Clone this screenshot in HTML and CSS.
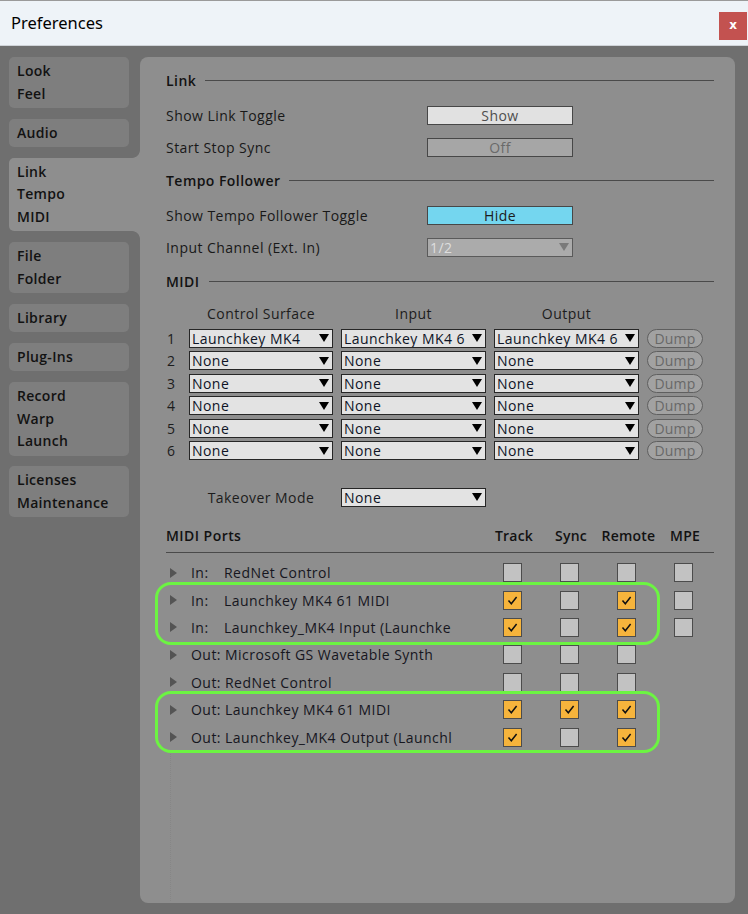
FILE: index.html
```html
<!DOCTYPE html>
<html>
<head>
<meta charset="utf-8">
<title>Preferences</title>
<link rel="stylesheet" href="styles.css">
</head>
<body>
<div class="window">
  <header class="titlebar">
    <span class="title">Preferences</span>
    <span class="close">x</span>
  </header>
  <div class="main">
    <nav class="tabs">
      <div class="tab"><span>Look</span><span>Feel</span></div>
      <div class="tab"><span>Audio</span></div>
      <div class="tab active"><span>Link</span><span>Tempo</span><span>MIDI</span></div>
      <div class="tab"><span>File</span><span>Folder</span></div>
      <div class="tab"><span>Library</span></div>
      <div class="tab"><span>Plug-Ins</span></div>
      <div class="tab"><span>Record</span><span>Warp</span><span>Launch</span></div>
      <div class="tab"><span>Licenses</span><span>Maintenance</span></div>
    </nav>
    <section class="panel">
      <div class="sec-head first">Link</div>
      <div class="row"><span class="label">Show Link Toggle</span><span class="btn btn-light">Show</span></div>
      <div class="row"><span class="label">Start Stop Sync</span><span class="btn btn-off">Off</span></div>

      <div class="sec-head">Tempo Follower</div>
      <div class="row"><span class="label">Show Tempo Follower Toggle</span><span class="btn btn-on">Hide</span></div>
      <div class="row"><span class="label">Input Channel (Ext. In)</span><span class="select select-disabled"><span class="sel-text">1/2</span><span class="arrow"></span></span></div>

      <div class="sec-head midi">MIDI</div>
      <div class="midi-grid">
        <span></span>
        <span class="colhead">Control Surface</span>
        <span class="colhead">Input</span>
        <span class="colhead">Output</span>
        <span></span>

        <span class="num">1</span>
        <span class="select"><span class="sel-text">Launchkey MK4</span><span class="arrow"></span></span>
        <span class="select"><span class="sel-text">Launchkey MK4 6</span><span class="arrow"></span></span>
        <span class="select"><span class="sel-text">Launchkey MK4 6</span><span class="arrow"></span></span>
        <span class="dump">Dump</span>

        <span class="num">2</span>
        <span class="select"><span class="sel-text">None</span><span class="arrow"></span></span>
        <span class="select"><span class="sel-text">None</span><span class="arrow"></span></span>
        <span class="select"><span class="sel-text">None</span><span class="arrow"></span></span>
        <span class="dump">Dump</span>

        <span class="num">3</span>
        <span class="select"><span class="sel-text">None</span><span class="arrow"></span></span>
        <span class="select"><span class="sel-text">None</span><span class="arrow"></span></span>
        <span class="select"><span class="sel-text">None</span><span class="arrow"></span></span>
        <span class="dump">Dump</span>

        <span class="num">4</span>
        <span class="select"><span class="sel-text">None</span><span class="arrow"></span></span>
        <span class="select"><span class="sel-text">None</span><span class="arrow"></span></span>
        <span class="select"><span class="sel-text">None</span><span class="arrow"></span></span>
        <span class="dump">Dump</span>

        <span class="num">5</span>
        <span class="select"><span class="sel-text">None</span><span class="arrow"></span></span>
        <span class="select"><span class="sel-text">None</span><span class="arrow"></span></span>
        <span class="select"><span class="sel-text">None</span><span class="arrow"></span></span>
        <span class="dump">Dump</span>

        <span class="num">6</span>
        <span class="select"><span class="sel-text">None</span><span class="arrow"></span></span>
        <span class="select"><span class="sel-text">None</span><span class="arrow"></span></span>
        <span class="select"><span class="sel-text">None</span><span class="arrow"></span></span>
        <span class="dump">Dump</span>
      </div>

      <div class="takeover">
        <span></span>
        <span class="colhead">Takeover Mode</span>
        <span class="select"><span class="sel-text">None</span><span class="arrow"></span></span>
      </div>

      <div class="ports-head">
        <span class="ph-title">MIDI Ports</span>
        <span class="ph-col">Track</span>
        <span class="ph-col">Sync</span>
        <span class="ph-col">Remote</span>
        <span class="ph-col">MPE</span>
      </div>

      <div class="ports">
        <div class="port">
          <span class="tri"></span>
          <span class="pname"><span class="pin">In:</span>RedNet Control</span>
          <span class="cb"></span><span class="cb"></span><span class="cb"></span><span class="cb"></span>
        </div>
        <div class="group group-in">
          <div class="port">
            <span class="tri"></span>
            <span class="pname"><span class="pin">In:</span>Launchkey MK4 61 MIDI</span>
            <span class="cb on"><svg viewBox="0 0 17 17"><path d="M4.5 8.5 L7.3 11.8 L12.6 5"/></svg></span>
            <span class="cb"></span>
            <span class="cb on"><svg viewBox="0 0 17 17"><path d="M4.5 8.5 L7.3 11.8 L12.6 5"/></svg></span>
            <span class="cb"></span>
          </div>
          <div class="port">
            <span class="tri"></span>
            <span class="pname"><span class="pin">In:</span>Launchkey_MK4 Input (Launchke</span>
            <span class="cb on"><svg viewBox="0 0 17 17"><path d="M4.5 8.5 L7.3 11.8 L12.6 5"/></svg></span>
            <span class="cb"></span>
            <span class="cb on"><svg viewBox="0 0 17 17"><path d="M4.5 8.5 L7.3 11.8 L12.6 5"/></svg></span>
            <span class="cb"></span>
          </div>
        </div>
        <div class="port">
          <span class="tri"></span>
          <span class="pname">Out: Microsoft GS Wavetable Synth</span>
          <span class="cb"></span><span class="cb"></span><span class="cb"></span>
        </div>
        <div class="port">
          <span class="tri"></span>
          <span class="pname">Out: RedNet Control</span>
          <span class="cb"></span><span class="cb"></span><span class="cb"></span>
        </div>
        <div class="group group-out">
          <div class="port">
            <span class="tri"></span>
            <span class="pname">Out: Launchkey MK4 61 MIDI</span>
            <span class="cb on"><svg viewBox="0 0 17 17"><path d="M4.5 8.5 L7.3 11.8 L12.6 5"/></svg></span>
            <span class="cb on"><svg viewBox="0 0 17 17"><path d="M4.5 8.5 L7.3 11.8 L12.6 5"/></svg></span>
            <span class="cb on"><svg viewBox="0 0 17 17"><path d="M4.5 8.5 L7.3 11.8 L12.6 5"/></svg></span>
          </div>
          <div class="port">
            <span class="tri"></span>
            <span class="pname">Out: Launchkey_MK4 Output (Launchl</span>
            <span class="cb on"><svg viewBox="0 0 17 17"><path d="M4.5 8.5 L7.3 11.8 L12.6 5"/></svg></span>
            <span class="cb"></span>
            <span class="cb on"><svg viewBox="0 0 17 17"><path d="M4.5 8.5 L7.3 11.8 L12.6 5"/></svg></span>
          </div>
        </div>
        <div class="tree-guide"></div>
      </div>
    </section>
  </div>
</div>
</body>
</html>
```

FILE: styles.css
```css
* { box-sizing: border-box; }

html, body {
  margin: 0;
  padding: 0;
}

body {
  width: 748px;
  height: 914px;
  overflow: hidden;
  background: #6f6f6f;
  font-family: "Open Sans", "Noto Sans", "Liberation Sans", sans-serif;
  font-size: 14px;
  font-weight: 500;
  letter-spacing: 0.45px;
  color: #161616;
}

.window {
  display: flex;
  flex-direction: column;
  height: 914px;
}

/* ---------- title bar ---------- */
.titlebar {
  height: 46px;
  flex: none;
  display: flex;
  align-items: flex-start;
  justify-content: space-between;
  background: #eef3f8;
  border-top: 1px solid #9a9a9a;
  border-bottom: 1px solid #cfd3d8;
  padding-left: 11px;
}

.title {
  margin-top: 9px;
  font-family: "Noto Sans", "Open Sans", sans-serif;
  font-size: 16.5px;
  font-weight: 400;
  letter-spacing: 0;
  line-height: 26px;
  color: #000;
}

.close {
  margin-top: 11px;
  margin-right: 1px;
  width: 28px;
  height: 28px;
  background: #c35250;
  color: #fff;
  font-family: "DejaVu Sans", sans-serif;
  font-weight: bold;
  font-size: 12px;
  letter-spacing: 0;
  line-height: 26px;
  text-align: center;
}

/* ---------- main area ---------- */
.main {
  flex: 1;
  display: flex;
  gap: 11px;
  padding: 11px 13px 11px 9px;
}

.tabs {
  width: 120px;
  flex: none;
  display: flex;
  flex-direction: column;
  gap: 10.7px;
}

.tab {
  width: 120px;
  display: flex;
  flex-direction: column;
  padding: 3px 8px;
  line-height: 22.5px;
  background: #7e7e7e;
  border-radius: 5px;
  font-weight: 600;
  letter-spacing: 0.3px;
  color: #121212;
}

.tab.active {
  width: 131px;
  background: #8e8e8e;
  border-radius: 5px 0 0 5px;
  position: relative;
}

.tab.active::before,
.tab.active::after {
  content: "";
  position: absolute;
  right: 0;
  width: 8px;
  height: 8px;
}

.tab.active::before {
  top: -8px;
  background: radial-gradient(circle at 0 0, #6f6f6f 7.5px, #8e8e8e 8.3px);
}

.tab.active::after {
  bottom: -8px;
  background: radial-gradient(circle at 0 100%, #6f6f6f 7.5px, #8e8e8e 8.3px);
}

.panel {
  flex: 1;
  background: #8e8e8e;
  border-radius: 8px;
  padding: 13px 21px 0 26px;
}

/* ---------- sections ---------- */
.sec-head {
  display: flex;
  align-items: center;
  gap: 9px;
  height: 20px;
  margin: 7px 0 9px;
  font-weight: 600;
  color: #121212;
}

.sec-head.first { margin-top: 0; }
.sec-head.midi { margin-top: 8px; }

.sec-head::after {
  content: "";
  flex: 1;
  height: 1px;
  background: #4a4a4a;
}

.row {
  display: flex;
  align-items: center;
  height: 32px;
}

.label {
  width: 261px;
  color: #181818;
}

.btn {
  width: 146px;
  height: 19px;
  border: 1px solid #474747;
  text-align: center;
  line-height: 17px;
}

.btn-light { background: #e1e1e1; color: #4e4e4e; }
.btn-off   { background: #a6a6a6; color: #6a6a6a; }
.btn-on    { background: #74d6ef; color: #1c1c1c; }

/* ---------- dropdowns ---------- */
.select {
  height: 19px;
  display: flex;
  align-items: center;
  border: 1px solid #262626;
  background: #e3e3e3;
  padding: 0 3px 0 2px;
  color: #0e1426;
  line-height: 17px;
}

.sel-text {
  flex: 1;
  overflow: hidden;
  white-space: nowrap;
}

.arrow {
  flex: none;
  width: 0;
  height: 0;
  margin-left: 2px;
  border-left: 5px solid transparent;
  border-right: 5px solid transparent;
  border-top: 8px solid #000;
}

.select-disabled {
  width: 146px;
  border-color: #5a5a5a;
  background: #ababab;
  color: #dedede;
}

.select-disabled .arrow { border-top-color: #7a7a7a; }

/* ---------- MIDI grid ---------- */
.midi-grid,
.takeover {
  display: grid;
  grid-template-columns: 23px 152px 153px 153px 56px;
  grid-auto-rows: 22.5px;
  grid-template-rows: 27px;
  align-items: center;
}

.midi-grid .select { width: 145px; }
.midi-grid .select:nth-child(5n+2) { width: 144px; }

.colhead {
  text-align: center;
  color: #1c1c1c;
  padding-right: 8px;
}

.num {
  padding-left: 1px;
  color: #1c1c1c;
}

.dump {
  height: 19px;
  border: 1px solid #5f5f5f;
  border-radius: 10px;
  background: #a2a2a2;
  color: #686868;
  text-align: center;
  line-height: 17px;
  letter-spacing: 0.2px;
}

.takeover {
  margin-top: 24px;
  grid-template-rows: 22px;
}

.takeover .select { width: 145px; }

/* ---------- MIDI ports ---------- */
.ports-head {
  display: grid;
  grid-template-columns: 317.5px repeat(4, 57px);
  margin-top: 18px;
  padding-bottom: 6px;
  border-bottom: 1px solid #4a4a4a;
  line-height: 20px;
  font-weight: 600;
  color: #121212;
}

.ph-col {
  text-align: center;
  padding-left: 4px;
  letter-spacing: 0.2px;
}

.ports {
  margin-top: 6px;
  position: relative;
}

.port {
  display: grid;
  grid-template-columns: 25px 292.5px repeat(4, 57px);
  height: 27.4px;
  align-items: center;
  color: #16161e;
}

.tri {
  width: 0;
  height: 0;
  margin-left: 4px;
  border-top: 5px solid transparent;
  border-bottom: 5px solid transparent;
  border-left: 7px solid #545454;
}

.pname {
  overflow: hidden;
  white-space: nowrap;
  margin-right: 16px;
}

.pin {
  display: inline-block;
  width: 33px;
}

.cb {
  justify-self: center;
  width: 19px;
  height: 19px;
  border: 1px solid #4c4c4c;
  background: #c2c2c2;
  display: flex;
}

.cb.on { background: #f6b43c; }

.cb svg {
  width: 17px;
  height: 17px;
  fill: none;
  stroke: #111;
  stroke-width: 1.5;
}

.group { position: relative; }

.group::after {
  content: "";
  position: absolute;
  left: -11px;
  right: 54px;
  border: 3px solid #6cf442;
  border-radius: 16px;
  pointer-events: none;
}

.group-in::after { top: -4px; bottom: -4px; }
.group-out::after { top: -5px; bottom: -2px; }

.tree-guide {
  margin-left: 4px;
  height: 150px;
  border-left: 1px dotted #868686;
}
```
